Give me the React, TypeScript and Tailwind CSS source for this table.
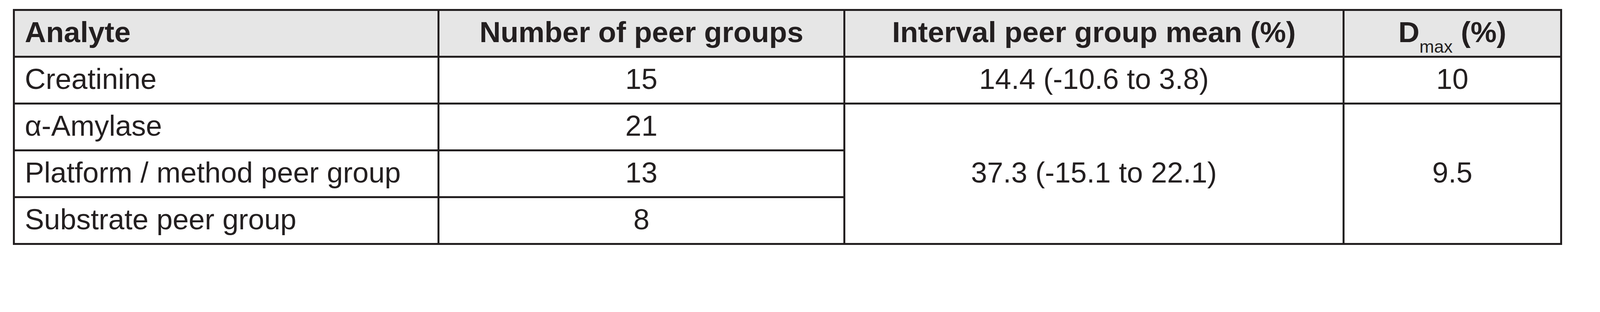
import React from "react";

const LINE = "#231f20";

function Cell({
  children,
  header = false,
  left = false,
  className = "",
}: {
  children: React.ReactNode;
  header?: boolean;
  left?: boolean;
  className?: string;
}) {
  return (
    <div
      className={
        "flex items-center pb-[5px] leading-none whitespace-nowrap text-[#231f20] " +
        (header ? "bg-[#e6e6e6] font-bold text-[75px] " : "bg-white text-[74px] ") +
        (left ? "justify-start pl-[26px] " : "justify-center ") +
        className
      }
    >
      {children}
    </div>
  );
}

export default function App() {
  return (
    <div
      className="w-full h-[667px] bg-white pt-[22.5px] pl-[32.5px] overflow-hidden"
      style={{ fontFamily: '"Liberation Sans", Arial, Helvetica, sans-serif' }}
    >
      <div
        className="grid w-fit grid-cols-[1082.5px_1034px_1273px_552px] grid-rows-[repeat(5,115px)] gap-[5px] p-[5px]"
        style={{ backgroundColor: LINE }}
      >
        <Cell header left>
          Analyte
        </Cell>
        <Cell header>Number of peer groups</Cell>
        <Cell header>Interval peer group mean (%)</Cell>
        <Cell header>
          <span>
            D
            <span className="relative top-[27px] text-[45px] font-normal">max</span>
            <span> (%)</span>
          </span>
        </Cell>

        <Cell left>Creatinine</Cell>
        <Cell>15</Cell>
        <Cell>14.4 (-10.6 to 3.8)</Cell>
        <Cell>10</Cell>

        <Cell left>α-Amylase</Cell>
        <Cell>21</Cell>
        <Cell className="row-span-3">37.3 (-15.1 to 22.1)</Cell>
        <Cell className="row-span-3">9.5</Cell>

        <Cell left>Platform / method peer group</Cell>
        <Cell>13</Cell>

        <Cell left>Substrate peer group</Cell>
        <Cell>8</Cell>
      </div>
    </div>
  );
}
